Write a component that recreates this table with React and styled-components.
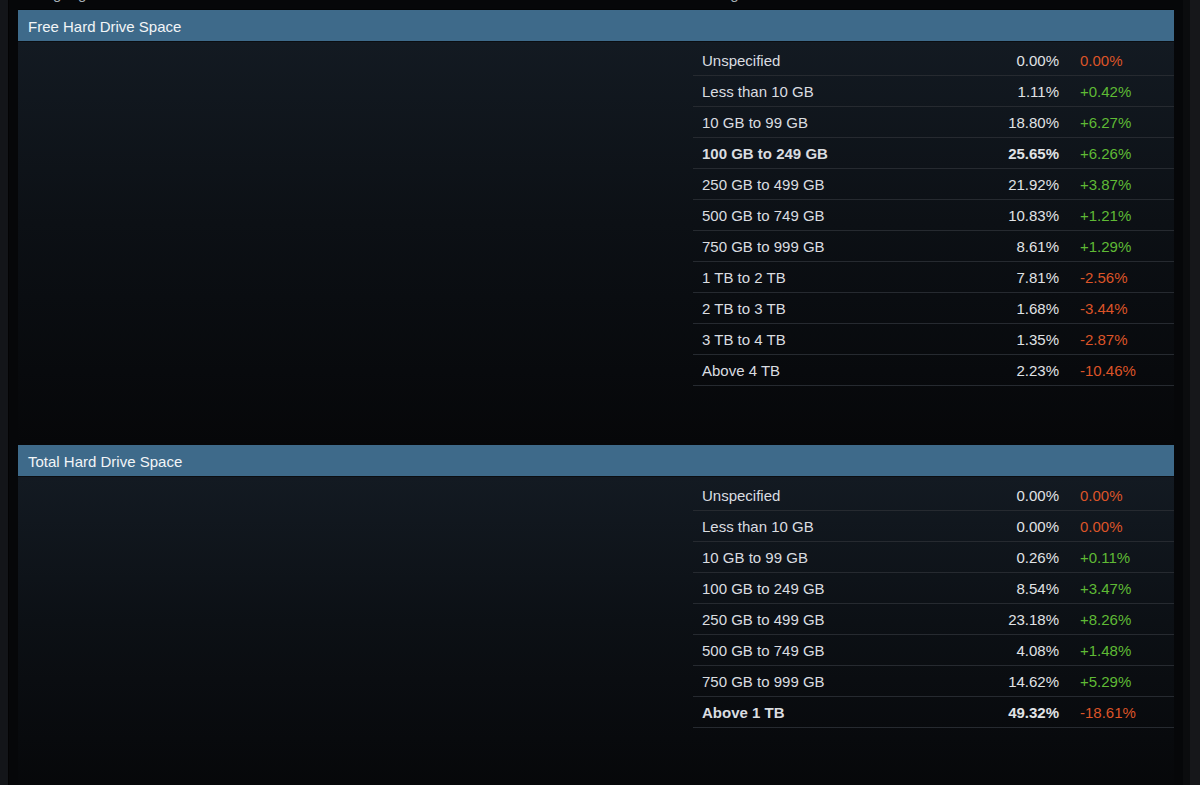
import React from "react";
import styled, { createGlobalStyle } from "styled-components";

const Global = createGlobalStyle`
  html, body { margin: 0; padding: 0; background: #16171a; }
  body { font-family: "Liberation Sans", Arial, sans-serif; }
`;

const Page = styled.div`
  display: flex;
  width: 1200px;
  height: 785px;
  overflow: hidden;
`;

const LeftGutter = styled.div`
  width: 8px;
  flex: none;
  background: #131519;
  border-right: 1px solid #030304;
`;

const RightGutter = styled.div`
  width: 10px;
  flex: none;
  background: #16171a;
  border-left: 7px solid #0b0c0e;
`;

const Main = styled.div`
  flex: 1;
  background: #060709;
  padding: 0 9px;
  display: flex;
  flex-direction: column;
  overflow: hidden;
`;

const Clip = styled.div`
  flex: none;
  height: 9px;
  overflow: hidden;
  display: flex;
  border-bottom: 1px solid #030405;
`;

const ClipText = styled.div`
  margin-top: -15px;
  font-size: 15px;
  line-height: 17px;
  color: #a7b0b8;
  padding-left: ${(p) => p.$pad}px;
  width: ${(p) => p.$w}px;
  flex: none;
`;

const Section = styled.section`
  flex: none;
  display: flex;
  flex-direction: column;
`;

const Header = styled.div`
  flex: none;
  height: 31px;
  background: #3e6a8a;
  border-bottom: 1px solid #0b0e12;
  color: #f2f5f7;
  font-size: 15px;
  display: flex;
  align-items: center;
  padding: 1px 0 0 10px;
  box-sizing: content-box;
  height: 30px;
`;

const Body = styled.div`
  flex: none;
  height: ${(p) => p.$h}px;
  background: linear-gradient(180deg, #131a22 0%, #0c1015 45%, #060709 100%);
  display: flex;
  justify-content: flex-end;
  padding-top: 3px;
  box-sizing: border-box;
`;

const Table = styled.div`
  width: 481px;
  align-self: flex-start;
`;

const Row = styled.div`
  display: grid;
  grid-template-columns: 1fr 140px 94px;
  height: 30px;
  align-items: center;
  border-bottom: 1px solid #262a30;
  font-size: 15px;
`;

const Label = styled.div`
  padding-left: 9px;
  color: #dadde0;
  font-weight: ${(p) => (p.$bold ? 700 : 400)};
`;

const Value = styled.div`
  text-align: right;
  padding-right: 21px;
  color: #e0e3e6;
  font-weight: ${(p) => (p.$bold ? 700 : 400)};
`;

const Change = styled.div`
  color: ${(p) => (p.$up ? "#5fba35" : "#dc5428")};
`;

const free = [
  ["Unspecified", "0.00%", "0.00%"],
  ["Less than 10 GB", "1.11%", "+0.42%"],
  ["10 GB to 99 GB", "18.80%", "+6.27%"],
  ["100 GB to 249 GB", "25.65%", "+6.26%", true],
  ["250 GB to 499 GB", "21.92%", "+3.87%"],
  ["500 GB to 749 GB", "10.83%", "+1.21%"],
  ["750 GB to 999 GB", "8.61%", "+1.29%"],
  ["1 TB to 2 TB", "7.81%", "-2.56%"],
  ["2 TB to 3 TB", "1.68%", "-3.44%"],
  ["3 TB to 4 TB", "1.35%", "-2.87%"],
  ["Above 4 TB", "2.23%", "-10.46%"],
];

const total = [
  ["Unspecified", "0.00%", "0.00%"],
  ["Less than 10 GB", "0.00%", "0.00%"],
  ["10 GB to 99 GB", "0.26%", "+0.11%"],
  ["100 GB to 249 GB", "8.54%", "+3.47%"],
  ["250 GB to 499 GB", "23.18%", "+8.26%"],
  ["500 GB to 749 GB", "4.08%", "+1.48%"],
  ["750 GB to 999 GB", "14.62%", "+5.29%"],
  ["Above 1 TB", "49.32%", "-18.61%", true],
];

function StatSection({ title, rows, height }) {
  return (
    <Section>
      <Header>{title}</Header>
      <Body $h={height}>
        <Table>
          {rows.map(([label, val, chg, bold]) => (
            <Row key={label}>
              <Label $bold={bold}>{label}</Label>
              <Value $bold={bold}>{val}</Value>
              <Change $up={chg.startsWith("+")}>{chg}</Change>
            </Row>
          ))}
        </Table>
      </Body>
    </Section>
  );
}

export default function App() {
  return (
    <>
      <Global />
      <Page>
        <LeftGutter />
        <Main>
          <Clip>
            <ClipText $pad={10} $w={684}>Language</ClipText>
            <ClipText $pad={0} $w={200}>English</ClipText>
          </Clip>
          <StatSection title="Free Hard Drive Space" rows={free} height={403} />
          <StatSection title="Total Hard Drive Space" rows={total} height={320} />
        </Main>
        <RightGutter />
      </Page>
    </>
  );
}
